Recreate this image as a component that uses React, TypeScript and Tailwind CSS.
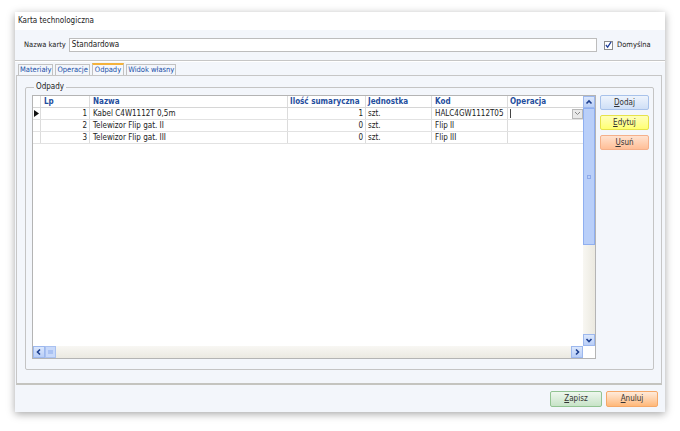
import React from 'react';

const font = { fontFamily: '"DejaVu Sans Condensed", "Liberation Sans", Arial, sans-serif' };

const rows = [
  { lp: 1, nazwa: 'Kabel C4W1112T 0,5m', ilosc: 1, jm: 'szt.', kod: 'HALC4GW1112T05' },
  { lp: 2, nazwa: 'Telewizor Flip gat. II', ilosc: 0, jm: 'szt.', kod: 'Flip II' },
  { lp: 3, nazwa: 'Telewizor Flip gat. III', ilosc: 0, jm: 'szt.', kod: 'Flip III' },
];

function Chevron({ dir }: { dir: 'up' | 'down' | 'left' | 'right' }) {
  const d = {
    up: 'M1.5 5.5 L4 3 L6.5 5.5',
    down: 'M1.5 3 L4 5.5 L6.5 3',
    left: 'M5 1.5 L2.5 4 L5 6.5',
    right: 'M3 1.5 L5.5 4 L3 6.5',
  }[dir];
  return (
    <svg width="8" height="8" viewBox="0 0 8 8">
      <path d={d} fill="none" stroke="#1d3f8f" strokeWidth="1.6" />
    </svg>
  );
}

function ScrollBtn({ dir }: { dir: 'up' | 'down' | 'left' | 'right' }) {
  return (
    <div className="w-[12px] h-[12px] shrink-0 flex items-center justify-center border border-[#9db8ee] bg-linear-to-b from-[#dbe7fc] to-[#b9cef7]">
      <Chevron dir={dir} />
    </div>
  );
}

function Btn({ label, accent, cls }: { label: string; accent: string; cls: string }) {
  return (
    <button className={`flex items-center justify-center rounded-[2px] border text-[8px] text-[#333] ${cls}`}>
      <span>
        <span className="underline">{accent}</span>
        {label}
      </span>
    </button>
  );
}

export default function App() {
  return (
    <div className="w-[680px] h-[431px] bg-white pl-[15px] pt-[12px]" style={font}>
      <div className="w-[650px] h-[400px] flex flex-col bg-[#f3f6fb] shadow-[0_2px_8px_rgba(0,0,0,0.35)]">
        {/* title */}
        <div className="h-[18px] shrink-0 bg-white flex items-center pl-[3px] text-[8px] text-[#222]">
          Karta technologiczna
        </div>

        {/* name row */}
        <div className="h-[30px] shrink-0 flex items-center pl-[9px] text-[8px] text-[#222]">
          <span className="whitespace-nowrap mr-[3px] text-[7.5px]">Nazwa karty</span>
          <div className="flex-1 h-[14px] bg-white border border-[#bdbdbd] flex items-center pl-[2px]">
            Standardowa
          </div>
          <div className="w-[68px] shrink-0 pl-[7px] flex items-center">
            <div className="w-[9px] h-[9px] bg-white border border-[#8c8c8c] flex items-center justify-center">
              <svg width="8" height="8" viewBox="0 0 8 8">
                <path d="M1 4 L3 6.5 L7 0.5" fill="none" stroke="#1f3f9a" strokeWidth="1.4" />
              </svg>
            </div>
            <span className="ml-[4px] text-[7.5px]">Domyślna</span>
          </div>
        </div>

        <div className="h-[2px] shrink-0 border-t border-[#c6c6c6] border-b border-b-white" />

        {/* tabs */}
        <div className="h-[11px] mt-[2px] shrink-0 flex items-end pl-[3px] gap-[2px] text-[7.5px] text-[#2050a8]">
          <div className="h-[11px] px-[1px] border border-b-0 border-[#c2c2c2] bg-[#f3f6fb] flex items-center">Materiały</div>
          <div className="h-[11px] px-[1px] border border-b-0 border-[#c2c2c2] bg-[#f3f6fb] flex items-center">Operacje</div>
          <div className="h-[12px] px-[2px] border border-b-0 border-[#c2c2c2] border-t-2 border-t-[#f4b23c] bg-[#f6f8fc] flex items-center">Odpady</div>
          <div className="h-[11px] px-[1px] border border-b-0 border-[#c2c2c2] bg-[#f3f6fb] flex items-center">Widok własny</div>
        </div>

        {/* tab panel */}
        <div className="h-[310px] shrink-0 ml-[1px] mr-[3px] border border-[#c6c6c6] border-b-2 border-b-[#c4c4bf] pl-[8px] pr-[7px] pt-[6px]">
          <fieldset className="h-[288px] border border-[#c4c4c4] rounded-[2px] pl-[6px] pr-[4px] pt-[3px] pb-[9px] flex">
            <legend className="text-[8px] text-[#222] ml-[2px] px-[2px] leading-[10px]">Odpady</legend>
            <div className="flex gap-[4px]">
              {/* grid */}
              <div className="w-[564px] h-[264px] border border-[#b4b4b4] bg-white flex">
                <div className="flex-1 flex flex-col">
                  <div className="flex-1 text-[8px]">
                    <div className="flex h-[12px] border-b border-[#d6d6d6] font-bold text-[#1f4e9e]">
                      <div className="w-[8px] border-r border-[#dcdcdc]" />
                      <div className="w-[49px] border-r border-[#dcdcdc] pl-[3px] leading-[12px]">Lp</div>
                      <div className="w-[198px] border-r border-[#dcdcdc] pl-[3px] leading-[12px]">Nazwa</div>
                      <div className="w-[78px] border-r border-[#dcdcdc] pl-[2px] leading-[12px] whitespace-nowrap overflow-hidden">Ilość sumaryczna</div>
                      <div className="w-[66px] border-r border-[#dcdcdc] pl-[2px] leading-[12px]">Jednostka</div>
                      <div className="w-[76px] border-r border-[#dcdcdc] pl-[3px] leading-[12px]">Kod</div>
                      <div className="flex-1 pl-[2px] leading-[12px]">Operacja</div>
                    </div>
                    {rows.map((r, i) => (
                      <div key={r.lp} className="flex h-[12px] border-b border-[#e2e2e2] text-[#222]">
                        <div className="w-[8px] border-r border-[#dcdcdc] flex items-center justify-center">
                          {i === 0 && (
                            <svg width="5" height="7" viewBox="0 0 5 7">
                              <path d="M0 0 L5 3.5 L0 7 Z" fill="#111" />
                            </svg>
                          )}
                        </div>
                        <div className="w-[49px] border-r border-[#dcdcdc] pr-[2px] text-right leading-[11px]">{r.lp}</div>
                        <div className="w-[198px] border-r border-[#dcdcdc] pl-[3px] leading-[11px]">{r.nazwa}</div>
                        <div className="w-[78px] border-r border-[#dcdcdc] pr-[2px] text-right leading-[11px]">{r.ilosc}</div>
                        <div className="w-[66px] border-r border-[#dcdcdc] pl-[2px] leading-[11px]">{r.jm}</div>
                        <div className="w-[76px] border-r border-[#dcdcdc] pl-[3px] leading-[11px] whitespace-nowrap overflow-hidden">{r.kod}</div>
                        <div className="flex-1 flex items-center justify-between pl-[2px]">
                          {i === 0 && (
                            <>
                              <div className="w-[1px] h-[9px] bg-[#444]" />
                              <div className="w-[11px] h-[10px] bg-[#e9e9e9] border border-[#b9b9b9] flex items-center justify-center">
                                <svg width="7" height="5" viewBox="0 0 7 5">
                                  <path d="M1 1 L3.5 3.5 L6 1" fill="none" stroke="#888" strokeWidth="1" />
                                </svg>
                              </div>
                            </>
                          )}
                        </div>
                      </div>
                    ))}
                  </div>
                  {/* horizontal scroll */}
                  <div className="h-[12px] shrink-0 flex bg-linear-to-b from-[#f8f7f3] to-[#ebe9e1]">
                    <ScrollBtn dir="left" />
                    <div className="w-[11px] h-[12px] border border-[#a9c1f0] bg-[#c8d9fa] flex items-center justify-center">
                      <div className="w-[5px] h-[4px] bg-[#aac2f2]" />
                    </div>
                    <div className="flex-1" />
                    <ScrollBtn dir="right" />
                  </div>
                </div>
                {/* vertical scroll */}
                <div className="w-[12px] shrink-0 flex flex-col bg-linear-to-r from-[#f8f7f2] to-[#ebe9e0]">
                  <ScrollBtn dir="up" />
                  <div className="h-[137px] shrink-0 border border-[#8faff0] bg-[#b9cff9] flex items-center justify-center">
                    <div className="w-[4px] h-[4px] border border-[#8eaaea]" />
                  </div>
                  <div className="flex-1" />
                  <ScrollBtn dir="down" />
                  <div className="h-[12px] shrink-0 bg-white" />
                </div>
              </div>

              {/* side buttons */}
              <div className="w-[49px] flex flex-col gap-[5px]">
                <Btn label="odaj" accent="D" cls="h-[15px] border-[#a8c2ea] bg-linear-to-b from-[#eef4fd] to-[#cfdff6]" />
                <Btn label="dytuj" accent="E" cls="h-[15px] border-[#e6e24a] bg-linear-to-b from-[#ffffb8] to-[#ffff70]" />
                <Btn label="suń" accent="U" cls="h-[15px] border-[#f4b08a] bg-linear-to-b from-[#ffe2cf] to-[#ffbe96]" />
              </div>
            </div>
          </fieldset>
        </div>

        {/* footer */}
        <div className="flex-1 flex items-center justify-end gap-[4px] pr-[7px]">
          <Btn label="apisz" accent="Z" cls="w-[52px] h-[16px] border-[#92c392] bg-linear-to-b from-[#eef7ee] to-[#c7e3c7]" />
          <Btn label="nuluj" accent="A" cls="w-[52px] h-[16px] border-[#f5a868] bg-linear-to-b from-[#ffeada] to-[#ffb878]" />
        </div>
      </div>
    </div>
  );
}
